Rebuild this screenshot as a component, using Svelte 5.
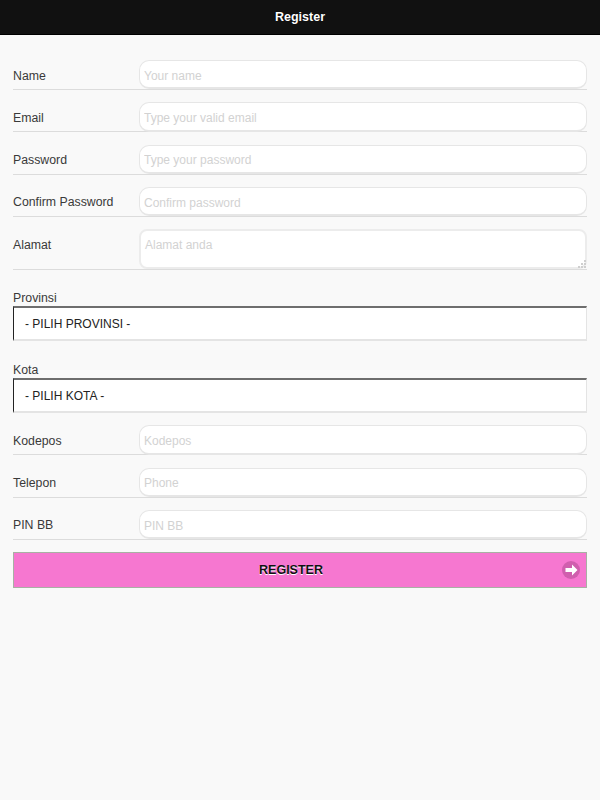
<script>
	const top = [
		{ label: 'Name', hint: 'Your name' },
		{ label: 'Email', hint: 'Type your valid email' },
		{ label: 'Password', hint: 'Type your password' },
		{ label: 'Confirm Password', hint: 'Confirm password' }
	];
	const bottom = [
		{ label: 'Kodepos', hint: 'Kodepos' },
		{ label: 'Telepon', hint: 'Phone' },
		{ label: 'PIN BB', hint: 'PIN BB' }
	];
</script>

{#snippet field(f)}
	<div class="row">
		<label for={f.label}>{f.label}</label>
		<input id={f.label} type="text" placeholder={f.hint} />
	</div>
{/snippet}

<div class="page">
	<header>Register</header>
	<form>
		{#each top as f}
			{@render field(f)}
		{/each}
		<div class="row area">
			<label for="alamat">Alamat</label>
			<div class="area-box">
				<textarea id="alamat" placeholder="Alamat anda"></textarea>
				<svg class="grip" width="8" height="8" viewBox="0 0 8 8" fill="#cfcfcf">
					<rect x="6" y="0" width="2" height="2" />
					<rect x="3" y="3" width="2" height="2" />
					<rect x="6" y="3" width="2" height="2" />
					<rect x="0" y="6" width="2" height="2" />
					<rect x="3" y="6" width="2" height="2" />
					<rect x="6" y="6" width="2" height="2" />
				</svg>
			</div>
		</div>
		<div class="stack first">
			<span class="cap">Provinsi</span>
			<div class="select">- PILIH PROVINSI -</div>
		</div>
		<div class="stack second">
			<span class="cap">Kota</span>
			<div class="select">- PILIH KOTA -</div>
		</div>
		{#each bottom as f}
			{@render field(f)}
		{/each}
		<button type="button">
			<span class="txt">REGISTER</span>
			<span class="go">
				<svg width="13" height="12" viewBox="0 0 13 12"><path d="M7 0.5 L12.5 6 L7 11.5 V8 H0.5 V4 H7 Z" fill="#fff" /></svg>
			</span>
		</button>
	</form>
</div>

<style>
	:global(body) { background: #f9f9f9; }
	.page {
		min-height: 800px;
		background: #f9f9f9;
		font-family: "Liberation Sans", Arial, sans-serif;
		font-size: 12.3px;
		color: #3a3a3a;
	}
	header {
		height: 35px;
		box-sizing: border-box;
		background: #111;
		border-bottom: 1px solid #000;
		color: #fff;
		font-size: 12.5px;
		font-weight: bold;
		line-height: 34px;
		text-align: center;
		text-shadow: 0 0 1px #000;
	}
	form { padding: 25px 13px 0; }
	.row {
		box-sizing: border-box;
		display: grid;
		grid-template-columns: 126px 1fr;
		align-items: start;
		height: 30px;
		margin-bottom: 12.33px;
		border-bottom: 1px solid #dcdcdc;
	}
	.row label { line-height: 29px; padding-top: 1.5px; }
	.row.area { height: 41px; margin-bottom: 0; }
	.area-box { position: relative; height: 40px; }
	.grip { position: absolute; right: 1px; bottom: 1px; }
	input, textarea {
		display: block;
		box-sizing: border-box;
		width: 100%;
		margin: 0;
		font: inherit;
		font-size: 12px;
		color: #333;
		background: #fff;
		border: 1px solid #e6e6e6;
		border-bottom: 2px solid #e6e6e6;
		border-radius: 10px;
		padding: 3px 4px 0;
		outline: none;
	}
	input { height: 29.33px; }
	textarea {
		height: 40px;
		padding: 7px 4px;
		border: 2px solid #ececec;
		border-radius: 8px;
		resize: none;
	}
	input::placeholder, textarea::placeholder { color: #d2d2d2; opacity: 1; }
	.stack.first { margin-top: 20.67px; margin-bottom: 22px; }
	.stack.second { margin-bottom: 12.3px; }
	.cap { display: block; line-height: 15px; }
	.select {
		box-sizing: border-box;
		height: 35px;
		background: #fff;
		border-top: 2px solid #6e6e6e;
		border-left: 1px solid #222;
		border-right: 1px solid #e4e4e4;
		border-bottom: 2px solid #e4e4e4;
		padding-left: 11px;
		font-size: 12px;
		line-height: 32.5px;
		color: #222;
	}
	button {
		position: relative;
		display: block;
		box-sizing: border-box;
		width: 100%;
		height: 36px;
		margin: 0;
		background: #f677d0;
		border: 1px solid #a8b0a4;
		font: inherit;
		font-weight: bold;
		font-size: 12.5px;
		color: #111;
		text-shadow: 0 1px 0 #fff;
		padding: 0 18px 1px 0;
	}
	.go {
		position: absolute;
		right: 6px;
		top: 8px;
		width: 18px;
		height: 18px;
		border-radius: 50%;
		background: #d05fae;
		display: flex;
		align-items: center;
		justify-content: center;
	}
</style>
